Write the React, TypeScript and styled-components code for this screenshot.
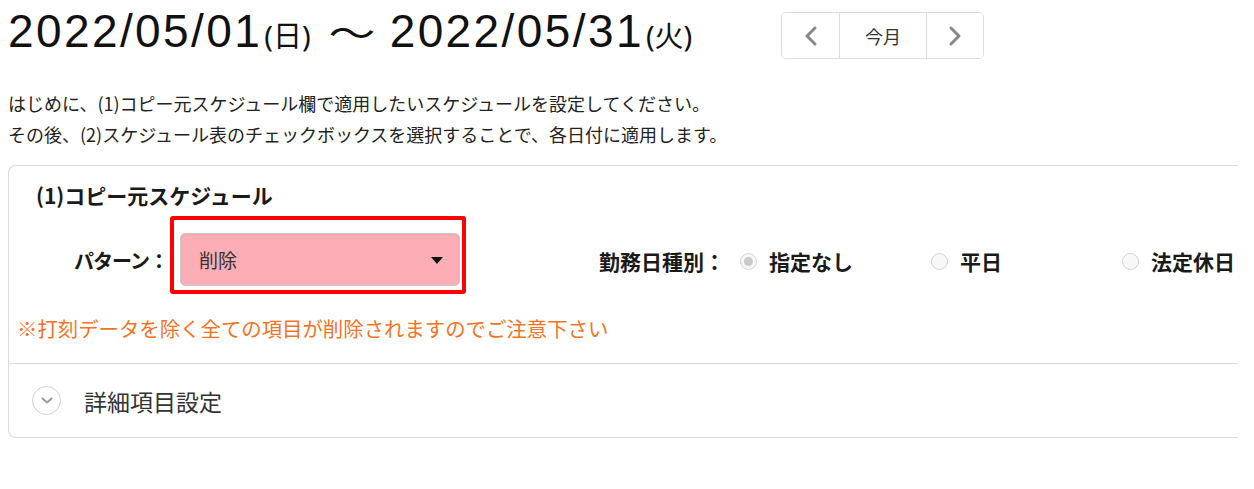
import { createGlobalStyle } from 'styled-components';
import styled from 'styled-components';

const GlobalStyle = createGlobalStyle`
  body {
    margin: 0;
    background: #ffffff;
    font-family: 'Noto Sans CJK JP', sans-serif;
    color: #333333;
  }
`;

const Page = styled.div`
  padding: 0 0 0 8px;
  width: 1246px;
  height: 489px;
  overflow: hidden;
`;

const Header = styled.div`
  display: flex;
  align-items: flex-start;
  box-sizing: border-box;
  height: 59px;
  padding-top: 3px;
`;

const Title = styled.h1`
  flex: 0 0 773px;
  margin: 0;
  font-family: 'Liberation Sans', 'Noto Sans CJK JP', sans-serif;
  font-size: 46px;
  font-weight: 400;
  letter-spacing: 2.4px;
  line-height: 56px;
  color: #111111;
  white-space: nowrap;
`;

const Weekday = styled.span`
  display: inline-block;
  margin: 0 2px 0 2px;
  font-family: 'Noto Sans', 'Noto Sans CJK JP', sans-serif;
  font-size: 29px;
  letter-spacing: 0;
  line-height: 40px;
`;

const Wave = styled.span`
  display: inline-block;
  margin: 0 20px 0 21px;
  font-family: 'Noto Sans CJK JP', sans-serif;
  font-size: 36px;
  letter-spacing: 0;
  line-height: 40px;
  transform: scaleX(1.3);
`;

const NavGroup = styled.div`
  display: flex;
  margin-top: 9px;
  height: 45px;
  border: 1px solid #dcdcdc;
  border-radius: 5px;
  overflow: hidden;
`;

const NavButton = styled.button<{ $width: number }>`
  display: flex;
  align-items: center;
  justify-content: center;
  width: ${(p) => p.$width}px;
  height: 100%;
  padding: 0;
  border: none;
  background: #ffffff;
  font-family: 'Noto Sans CJK JP', sans-serif;
  font-size: 18px;
  color: #333333;
  & + & {
    border-left: 1px solid #dcdcdc;
  }
`;

const Intro = styled.div`
  margin-top: 29px;
  font-size: 18px;
  line-height: 31px;
  color: #222222;
`;

const Card = styled.section`
  margin-top: 15px;
  width: 1229px;
  border: 1px solid #dadada;
  border-right: none;
  border-radius: 8px 0 0 8px;
`;

const CopySection = styled.div`
  padding: 14px 0 20px;
`;

const SectionTitle = styled.h2`
  margin: 0;
  padding-left: 27px;
  font-size: 21px;
  font-weight: 700;
  line-height: 30px;
  color: #1a1a1a;
`;

const FormRow = styled.div`
  display: flex;
  align-items: center;
  margin-top: 6px;
  & > * {
    flex-shrink: 0;
  }
`;

const FieldLabel = styled.span<{ $width?: number; $gap?: number; $tight?: boolean }>`
  box-sizing: border-box;
  ${(p) => (p.$width ? `width: ${p.$width}px; text-align: right;` : '')}
  margin-left: ${(p) => p.$gap ?? 0}px;
  padding-top: 12px;
  font-size: ${(p) => (p.$tight ? 20 : 21)}px;
  font-weight: 700;
  letter-spacing: ${(p) => (p.$tight ? -1 : 0)}px;
  line-height: 30px;
  color: #1a1a1a;
  white-space: nowrap;
`;

const Highlight = styled.div`
  margin-left: 2px;
  padding: 13px 2px 4px 6px;
  border: 4px solid #ff0000;
  border-radius: 3px;
`;

const Select = styled.div`
  position: relative;
  box-sizing: border-box;
  display: flex;
  align-items: center;
  width: 280px;
  height: 53px;
  padding-left: 18px;
  background: #fcadb5;
  border: 1px solid #c9c9c9;
  border-radius: 5px;
  box-shadow: inset 0 1px 2px rgba(0, 0, 0, 0.06);
  font-size: 19px;
  color: #333333;
`;

const Caret = styled.span`
  position: absolute;
  right: 16px;
  top: 50%;
  margin-top: -3px;
  width: 0;
  height: 0;
  border-left: 6px solid transparent;
  border-right: 6px solid transparent;
  border-top: 7px solid #111111;
`;

const RadioGroup = styled.div`
  display: flex;
  margin-left: 15px;
  padding-top: 12px;
`;

const RadioItem = styled.label`
  display: flex;
  flex-shrink: 0;
  align-items: center;
  gap: 12px;
  width: 191px;
  font-size: 21px;
  font-weight: 700;
  line-height: 30px;
  color: #1a1a1a;
  white-space: nowrap;
`;

const RadioCircle = styled.span<{ $checked?: boolean }>`
  position: relative;
  box-sizing: border-box;
  flex: 0 0 17px;
  width: 17px;
  height: 17px;
  border: 1px solid #d2d2d2;
  border-radius: 50%;
  background: #f8f8f8;
  &::after {
    content: '';
    display: ${(p) => (p.$checked ? 'block' : 'none')};
    position: absolute;
    left: 3px;
    top: 3px;
    width: 9px;
    height: 9px;
    border-radius: 50%;
    background: #cacaca;
  }
`;

const Warning = styled.p`
  margin: 19px 0 0;
  padding-left: 8px;
  font-size: 20.4px;
  line-height: 30px;
  color: #f5731f;
`;

const AccordionRow = styled.div`
  display: flex;
  align-items: center;
  gap: 23px;
  height: 73px;
  padding-left: 23px;
  border-top: 1px solid #dadada;
  font-size: 23px;
  color: #333333;
`;

const ToggleCircle = styled.span`
  display: flex;
  align-items: center;
  justify-content: center;
  box-sizing: border-box;
  width: 29px;
  height: 29px;
  border: 1.5px solid #d0d0d0;
  border-radius: 50%;
`;

const Chevron = ({ dir }: { dir: 'left' | 'right' }) => (
  <svg width="14" height="22" viewBox="0 0 14 22">
    <polyline
      points={dir === 'left' ? '11,3 3,11 11,19' : '3,3 11,11 3,19'}
      fill="none"
      stroke="#888888"
      strokeWidth="3"
      strokeLinecap="round"
      strokeLinejoin="round"
    />
  </svg>
);

const workdayTypes = [
  { id: 'none', label: '指定なし', checked: true },
  { id: 'weekday', label: '平日', checked: false },
  { id: 'holiday', label: '法定休日', checked: false }
];

const App = () => (
  <Page>
    <GlobalStyle />
    <Header>
      <Title>
        2022/05/01<Weekday>(日)</Weekday>
        <Wave>〜</Wave>
        2022/05/31<Weekday>(火)</Weekday>
      </Title>
      <NavGroup>
        <NavButton $width={57}>
          <Chevron dir="left" />
        </NavButton>
        <NavButton $width={87}>今月</NavButton>
        <NavButton $width={57}>
          <Chevron dir="right" />
        </NavButton>
      </NavGroup>
    </Header>
    <Intro>
      はじめに、(1)コピー元スケジュール欄で適用したいスケジュールを設定してください。
      <br />
      その後、(2)スケジュール表のチェックボックスを選択することで、各日付に適用します。
    </Intro>
    <Card>
      <CopySection>
        <SectionTitle>(1)コピー元スケジュール</SectionTitle>
        <FormRow>
          <FieldLabel $width={159} $tight>
            パターン：
          </FieldLabel>
          <Highlight>
            <Select>
              削除
              <Caret />
            </Select>
          </Highlight>
          <FieldLabel $gap={133}>勤務日種別：</FieldLabel>
          <RadioGroup>
            {workdayTypes.map((t) => (
              <RadioItem key={t.id}>
                <RadioCircle $checked={t.checked} />
                {t.label}
              </RadioItem>
            ))}
          </RadioGroup>
        </FormRow>
        <Warning>※打刻データを除く全ての項目が削除されますのでご注意下さい</Warning>
      </CopySection>
      <AccordionRow>
        <ToggleCircle>
          <svg width="14" height="9" viewBox="0 0 14 9">
            <polyline
              points="2.5,2.5 7,6.5 11.5,2.5"
              fill="none"
              stroke="#9a9a9a"
              strokeWidth="2"
              strokeLinecap="round"
              strokeLinejoin="round"
            />
          </svg>
        </ToggleCircle>
        詳細項目設定
      </AccordionRow>
    </Card>
  </Page>
);

export default App;
